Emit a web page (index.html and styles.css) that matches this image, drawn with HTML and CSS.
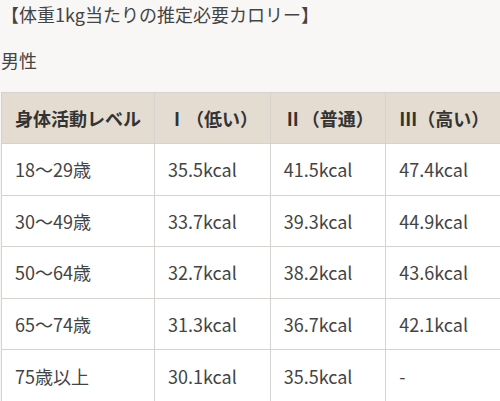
FILE: index.html
```html
<!DOCTYPE html>
<html lang="ja">
<head>
<meta charset="utf-8">
<link rel="stylesheet" href="styles.css">
</head>
<body>
<div class="page">
  <p class="title">【体重1kg当たりの推定必要カロリー】</p>
  <p class="sub">男性</p>
  <table class="kcal">
    <thead>
      <tr><th>身体活動レベル</th><th>Ⅰ（低い）</th><th>Ⅱ（普通）</th><th>Ⅲ（高い）</th></tr>
    </thead>
    <tbody>
      <tr><td>18～29歳</td><td>35.5kcal</td><td>41.5kcal</td><td>47.4kcal</td></tr>
      <tr><td>30～49歳</td><td>33.7kcal</td><td>39.3kcal</td><td>44.9kcal</td></tr>
      <tr><td>50～64歳</td><td>32.7kcal</td><td>38.2kcal</td><td>43.6kcal</td></tr>
      <tr><td>65～74歳</td><td>31.3kcal</td><td>36.7kcal</td><td>42.1kcal</td></tr>
      <tr><td>75歳以上</td><td>30.1kcal</td><td>35.5kcal</td><td>-</td></tr>
    </tbody>
  </table>
</div>
</body>
</html>
```
FILE: styles.css
```css
html, body {
  margin: 0;
  padding: 0;
  background: #f8f7f5;
  overflow: hidden;
}
.page {
  width: 520px;
  padding-left: 1px;
  font-family: "Noto Sans CJK JP", "Noto Sans", sans-serif;
  color: #444;
  font-size: 18px;
}
.title {
  margin: 0;
  padding-top: 1px;
  line-height: 26px;
}
.sub {
  margin: 20px 0 0 0;
  line-height: 26px;
}
.kcal {
  margin-top: 19px;
  border-collapse: collapse;
  width: 501px;
  table-layout: fixed;
  background: #fff;
}
.kcal th, .kcal td {
  border: 1px solid #d6d3cf;
  text-align: left;
  padding: 0 0 0 13px;
  height: 50.6px;
}
.kcal th {
  background: #e4dcd1;
  color: #333;
  font-weight: bold;
  height: 50px;
}
.kcal th:first-child, .kcal td:first-child {
  width: 139px;
}
```
